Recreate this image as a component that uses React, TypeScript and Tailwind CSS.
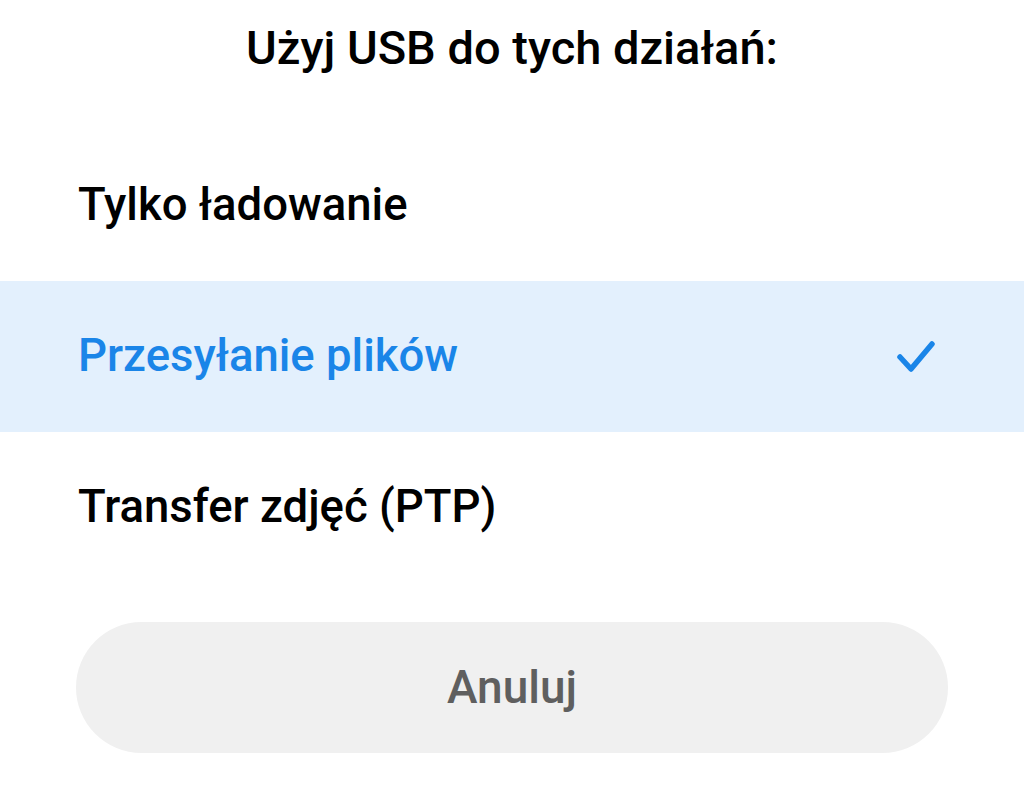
import React from "react";

export default function App() {
  return (
    <div
      className="w-[1024px] h-[789px] bg-white flex flex-col overflow-hidden"
      style={{ fontFamily: "Roboto, 'Noto Sans', sans-serif" }}
    >
      <div className="h-[130px] flex justify-center pt-[18px]">
        <h1 className="text-[47px] leading-[60px] font-medium text-black">
          Użyj USB do tych działań:
        </h1>
      </div>
      <div className="h-[151px] flex items-center px-[78px]">
        <span className="text-[45.5px] font-medium text-black">Tylko ładowanie</span>
      </div>
      <div className="h-[151px] flex items-center justify-between pl-[78px] pr-[88px] bg-[#e3f0fd]">
        <span className="text-[45.5px] font-medium text-[#1a85e8]">Przesyłanie plików</span>
        <svg width="40" height="34" viewBox="0 0 40 34" fill="none">
          <path
            d="M4 17 L15 29 L36 4"
            stroke="#1a85e8"
            strokeWidth="5.5"
            strokeLinecap="round"
            strokeLinejoin="round"
          />
        </svg>
      </div>
      <div className="h-[151px] flex items-center px-[78px]">
        <span className="text-[45.5px] font-medium text-black">Transfer zdjęć (PTP)</span>
      </div>
      <div className="px-[76px] pt-[39px]">
        <button className="w-full h-[131px] rounded-full bg-[#f0f0f0] flex items-center justify-center">
          <span className="text-[46px] font-medium text-[#5f5f5f]">Anuluj</span>
        </button>
      </div>
    </div>
  );
}
